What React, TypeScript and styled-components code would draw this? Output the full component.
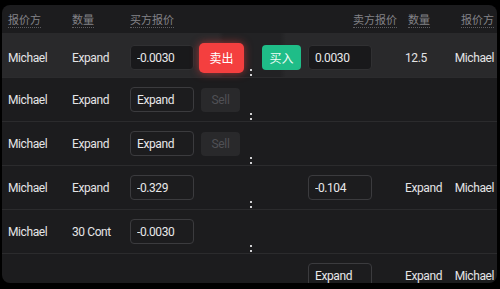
import React from "react";
import styled, { createGlobalStyle } from "styled-components";

const GlobalStyle = createGlobalStyle`
  html, body {
    margin: 0;
    padding: 0;
    background: #000;
  }
  body {
    font-family: Roboto, "Noto Sans CJK SC", sans-serif;
    -webkit-font-smoothing: antialiased;
  }
`;

const Frame = styled.div`
  width: 500px;
  height: 289px;
  box-sizing: border-box;
  padding: 5px 3px 6px 2px;
  background: #000;
`;

const Panel = styled.div`
  height: 100%;
  background: #1c1c1e;
  border-radius: 8px;
  overflow: hidden;
  color: #e4e4e6;
  font-size: 12px;
  letter-spacing: -0.4px;
`;

//
// rows
/////////////////////////////////////////////////////////////////////////////////
const Row = styled.div<{ $active?: boolean }>`
  position: relative;
  display: flex;
  align-items: center;
  height: ${(p) => (p.$active ? "45px" : "44px")};
  padding-top: ${(p) => (p.$active ? "5px" : "0")};
  box-sizing: border-box;
  border-bottom: 1px solid #2b2b2d;
  background: ${(p) =>
    p.$active
      ? "linear-gradient(90deg, #29292b 0, #29292b 216px, #222224 222px, #222224 278px, #29292b 284px)"
      : "transparent"};
`;

const HeaderRow = styled.div`
  display: flex;
  align-items: center;
  height: 28px;
  color: #828287;
  font-size: 11px;
  letter-spacing: 0;
`;

const BidSide = styled.div`
  width: 248px;
  box-sizing: border-box;
  padding-left: 6px;
  display: grid;
  grid-template-columns: 64px 58px 69px 1fr;
  align-items: center;
`;

const AskSide = styled.div`
  flex: 1;
  box-sizing: border-box;
  padding: 0 3px 0 12px;
  display: grid;
  grid-template-columns: 46px 64px 33px 1fr auto;
  align-items: center;
`;

const Cell = styled.div<{ $right?: boolean }>`
  white-space: nowrap;
  text-align: ${(p) => (p.$right ? "right" : "left")};
`;

// header labels
const HeadLabel = styled.span`
  border-bottom: 1px dotted #5c5c60;
`;
const AskPriceHead = styled(Cell)`
  grid-column: 1 / 4;
  padding-right: 8px;
`;
const AskQtyHead = styled(Cell)`
  grid-column: 4;
  padding-left: 3px;
`;
const AskNameHead = styled(Cell)`
  grid-column: 5;
`;

// inputs
const PriceInput = styled.input<{ $active?: boolean }>`
  width: 64px;
  height: 25px;
  box-sizing: border-box;
  padding: 0 6px;
  border: 1px solid ${(p) => (p.$active ? "#303032" : "#3b3b3e")};
  border-radius: 4px;
  background: ${(p) => (p.$active ? "#19191b" : "transparent")};
  color: #e8e8ea;
  font-family: Roboto, sans-serif;
  font-size: 12px;
  letter-spacing: -0.4px;
  outline: none;
`;

// action buttons
const SellButton = styled.button`
  width: 45px;
  height: 30px;
  border: none;
  border-radius: 5px;
  background: #f43f3f;
  box-shadow: 0 0 9px rgba(244, 63, 63, 0.6);
  color: #fff;
  font-family: "Noto Sans CJK SC", sans-serif;
  font-size: 12px;
  padding: 0;
`;
const BuyButton = styled.button`
  width: 39px;
  height: 25px;
  border: none;
  border-radius: 4px;
  background: #1fbd88;
  color: #eefcf6;
  font-family: "Noto Sans CJK SC", sans-serif;
  font-size: 12px;
  padding: 0;
`;
const DisabledButton = styled.button`
  width: 39px;
  height: 24px;
  margin-left: 2px;
  border: none;
  border-radius: 4px;
  background: #29292b;
  color: #505055;
  font-family: Roboto, sans-serif;
  font-size: 12px;
  letter-spacing: -0.3px;
  padding: 0;
`;

const AskQty = styled(Cell)`
  grid-column: 4;
`;
const AskName = styled(Cell)`
  grid-column: 5;
`;

// splitter grip sitting on each row line
const Grip = styled.div`
  position: absolute;
  left: 248px;
  bottom: 1px;
  display: flex;
  flex-direction: column;
  gap: 3px;
  & > i {
    width: 2px;
    height: 2px;
    background: #d0d0d2;
  }
`;

type Quote = {
  bidName?: string;
  bidQty?: string;
  bid?: string;
  bidAction?: "sell" | "disabled";
  ask?: string;
  askAction?: "buy";
  askQty?: string;
  askName?: string;
  active?: boolean;
};

const quotes: Quote[] = [
  {
    bidName: "Michael",
    bidQty: "Expand",
    bid: "-0.0030",
    bidAction: "sell",
    ask: "0.0030",
    askAction: "buy",
    askQty: "12.5",
    askName: "Michael",
    active: true,
  },
  { bidName: "Michael", bidQty: "Expand", bid: "Expand", bidAction: "disabled" },
  { bidName: "Michael", bidQty: "Expand", bid: "Expand", bidAction: "disabled" },
  {
    bidName: "Michael",
    bidQty: "Expand",
    bid: "-0.329",
    ask: "-0.104",
    askQty: "Expand",
    askName: "Michael",
  },
  { bidName: "Michael", bidQty: "30 Cont", bid: "-0.0030" },
  { ask: "Expand", askQty: "Expand", askName: "Michael" },
];

const QuoteRow = ({ q }: { q: Quote }) => (
  <Row $active={q.active}>
    <BidSide>
      <Cell>{q.bidName}</Cell>
      <Cell>{q.bidQty}</Cell>
      <Cell>{q.bid && <PriceInput readOnly value={q.bid} $active={q.active} />}</Cell>
      <Cell>
        {q.bidAction === "sell" && <SellButton>卖出</SellButton>}
        {q.bidAction === "disabled" && <DisabledButton disabled>Sell</DisabledButton>}
      </Cell>
    </BidSide>
    <AskSide>
      <Cell>{q.askAction === "buy" && <BuyButton>买入</BuyButton>}</Cell>
      <Cell>{q.ask && <PriceInput readOnly value={q.ask} $active={q.active} />}</Cell>
      <AskQty>{q.askQty}</AskQty>
      <AskName $right>{q.askName}</AskName>
    </AskSide>
    <Grip>
      <i />
      <i />
    </Grip>
  </Row>
);

const App = () => (
  <>
    <GlobalStyle />
    <Frame>
      <Panel>
        <HeaderRow>
          <BidSide>
            <Cell>
              <HeadLabel>报价方</HeadLabel>
            </Cell>
            <Cell>
              <HeadLabel>数量</HeadLabel>
            </Cell>
            <Cell>
              <HeadLabel>买方报价</HeadLabel>
            </Cell>
          </BidSide>
          <AskSide>
            <AskPriceHead $right>
              <HeadLabel>卖方报价</HeadLabel>
            </AskPriceHead>
            <AskQtyHead>
              <HeadLabel>数量</HeadLabel>
            </AskQtyHead>
            <AskNameHead $right>
              <HeadLabel>报价方</HeadLabel>
            </AskNameHead>
          </AskSide>
        </HeaderRow>
        {quotes.map((q, i) => (
          <QuoteRow key={i} q={q} />
        ))}
      </Panel>
    </Frame>
  </>
);

export default App;
